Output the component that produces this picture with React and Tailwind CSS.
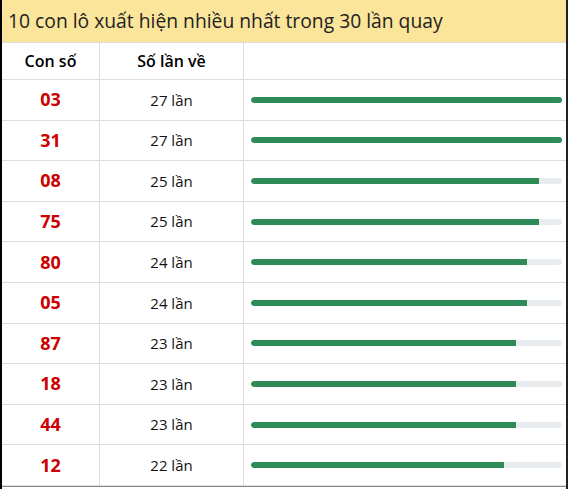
import React from "react";

const rows = [
  ["03", 27],
  ["31", 27],
  ["08", 25],
  ["75", 25],
  ["80", 24],
  ["05", 24],
  ["87", 23],
  ["18", 23],
  ["44", 23],
  ["12", 22],
];

export default function App() {
  return (
    <div
      className="w-[568px] h-[489px] bg-white flex flex-col border-l-2 border-l-black border-r-2 border-r-[#222] overflow-hidden"
      style={{ fontFamily: '"Open Sans", "Noto Sans", sans-serif' }}
    >
      <div className="h-[43px] shrink-0 bg-[#fbe59b] border-b border-[#ddd] flex items-center pl-[6px] text-[19.3px] font-medium text-[#222] leading-none">
        10 con lô xuất hiện nhiều nhất trong 30 lần quay
      </div>
      <div className="h-[37px] shrink-0 flex border-b border-[#ddd] text-[16px] font-semibold text-black">
        <div className="w-[98px] border-r border-[#ddd] flex items-center justify-center">Con số</div>
        <div className="w-[144px] border-r border-[#ddd] flex items-center justify-center">Số lần về</div>
        <div className="flex-1" />
      </div>
      <div className="h-[406px] shrink-0 flex flex-col">
        {rows.map(([num, cnt], i) => (
          <div key={i} className="flex-1 flex border-b border-[#ddd]">
            <div className="w-[98px] border-r border-[#ddd] flex items-center justify-center text-[18px] font-bold text-[#cc0000]">
              {num}
            </div>
            <div className="w-[144px] border-r border-[#ddd] flex items-center justify-center text-[15px] text-[#111]">
              {cnt} lần
            </div>
            <div className="flex-1 flex items-center pl-[7px] pr-[4px]">
              <div className="w-full h-[6px] rounded-full bg-[#e9ecef] overflow-hidden">
                <div
                  className="h-full bg-[#2e8b57] rounded-l-full"
                  style={{ width: `${(cnt / 27) * 100}%` }}
                />
              </div>
            </div>
          </div>
        ))}
      </div>
      <div className="flex-1 border-t border-[#888] bg-white" />
    </div>
  );
}
